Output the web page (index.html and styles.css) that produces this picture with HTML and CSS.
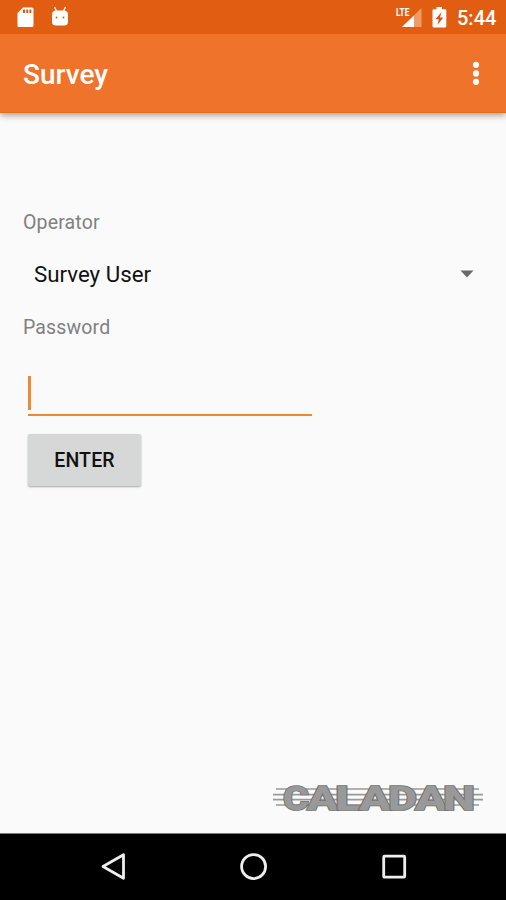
FILE: index.html
```html
<!DOCTYPE html>
<html lang="en">
<head>
<meta charset="utf-8">
<title>Survey</title>
<link rel="stylesheet" href="styles.css">
</head>
<body>
<div class="screen">
  <header class="status">
    <svg class="sd" width="17" height="21" viewBox="0 0 17 21"><path fill="#fff" fill-rule="evenodd" d="M6 .5H15Q16.500 .5 16.500 2V18.500Q16.500 20 15 20H2Q.5 20 .5 18.500V6ZM6 2.500V6H8V2.500ZM9.200 2.500V6H11.200V2.500ZM12.400 2.500V6H14.400V2.500Z"/></svg>
    <svg class="droid" width="18" height="20" viewBox="0 0 18 20"><path d="M3.500 0 6 5M14.500 0 12 5" stroke="#fff" stroke-width="1.300"/><path fill="#fff" d="M1 8Q1 3.500 5 3.500H13Q17 3.500 17 8V15Q17 18.500 13 18.500H5Q1 18.500 1 15Z"/><circle cx="5.500" cy="10.500" r="1" fill="#e15d12"/><circle cx="12.500" cy="10.500" r="1" fill="#e15d12"/></svg>
    <span class="spacer"></span>
    <svg class="signal" width="27" height="21" viewBox="0 0 27 21"><path fill="#f09a68" d="M25.500 1V20H6Z"/><path fill="#fff" d="M18 8.500V20H6Z"/><text class="lte" x="0" y="9" textLength="13.500" lengthAdjust="spacingAndGlyphs">LTE</text></svg>
    <svg class="battery" width="15" height="21" viewBox="0 0 15 21"><path fill="#fff" d="M4.500 0H10V2.300H13Q14.300 2.300 14.300 3.600V19Q14.300 20.500 13 20.500H2Q.5 20.500 .5 19V3.600Q.5 2.300 2 2.300H4.500Z"/><path fill="#df5010" d="M9.500 5 3.500 12.300H6.800L5.500 18 11.200 10.500H8Z"/></svg>
    <span class="clock">5:44</span>
  </header>
  <div class="appbar">
    <h1>Survey</h1>
    <svg width="8" height="26" viewBox="0 0 8 26" fill="#fff"><circle cx="4" cy="4.800" r="3.100"/><circle cx="4" cy="13.400" r="3.100"/><circle cx="4" cy="21.800" r="3.100"/></svg>
  </div>
  <main>
    <div class="label">Operator</div>
    <div class="select"><span>Survey User</span><svg width="14" height="8" viewBox="0 0 14 8"><path fill="#696969" d="M.5 .5H13.500L7 7.500Z"/></svg></div>
    <div class="label">Password</div>
    <div class="field"><span class="caret"></span></div>
    <button>ENTER</button>
    <svg class="logo" width="212" height="30" viewBox="0 0 212 30">
      <path class="rules" d="M4 5H207M1 10.700H211M1 15.700H211M4 21H207"/>
      <g class="letters">
        <text x="11" y="26" textLength="26" lengthAdjust="spacingAndGlyphs">C</text>
        <text x="35" y="26" textLength="31" lengthAdjust="spacingAndGlyphs">A</text>
        <text x="63" y="26" textLength="27" lengthAdjust="spacingAndGlyphs">L</text>
        <text x="87" y="26" textLength="32" lengthAdjust="spacingAndGlyphs">A</text>
        <text x="116" y="26" textLength="29" lengthAdjust="spacingAndGlyphs">D</text>
        <text x="143" y="26" textLength="32" lengthAdjust="spacingAndGlyphs">A</text>
        <text x="171" y="26" textLength="32" lengthAdjust="spacingAndGlyphs">N</text>
      </g>
    </svg>
  </main>
  <nav>
    <svg width="26" height="30" viewBox="0 0 26 30"><path d="M3 14.500 23.500 2.700V26.300Z"/></svg>
    <svg width="30" height="30" viewBox="0 0 30 30"><circle cx="14.600" cy="14.600" r="12"/></svg>
    <svg width="26" height="30" viewBox="0 0 26 30"><rect x="2.700" y="4.200" width="21" height="21" rx="1"/></svg>
  </nav>
</div>
</body>
</html>
```

FILE: styles.css
```css
* { box-sizing: border-box; }
body { margin: 0; font-family: Roboto, "Liberation Sans", sans-serif; }
svg { display: block; flex: none; overflow: visible; }
.screen { width: 506px; height: 900px; display: flex; flex-direction: column; background: #fafafa; overflow: hidden; }
.status { height: 34px; flex: none; display: flex; align-items: flex-start; padding: 7px 11px 0 17px; background: #e15d12; color: #fff; position: relative; z-index: 2; }
.droid { margin-left: 17px; }
.spacer { flex: 1; }
.battery { margin-left: 9px; }
.lte { font-size: 11px; font-weight: 700; fill: #fff; }
.clock { width: 38px; margin-left: 10px; font-size: 20px; line-height: 23px; font-weight: 500; white-space: nowrap; }
.appbar { height: 79px; flex: none; display: flex; align-items: center; justify-content: space-between; padding: 0 26px 0 23px; background: #ef732b; color: #fff; border-bottom: 1px solid #e86a20; box-shadow: 0 2px 7px rgba(0,0,0,.4); z-index: 1; }
h1 { margin: 3px 0 0; font-size: 28px; line-height: 32px; font-weight: 500; }
main { flex: 1; display: flex; flex-direction: column; align-items: flex-start; padding: 96px 22px 19px 23px; }
.label { height: 28px; font-size: 19.500px; line-height: 28px; letter-spacing: .15px; color: #818181; }
.select { width: 100%; height: 77px; padding: 0 10px 4px 11px; display: flex; align-items: center; justify-content: space-between; font-size: 22.300px; color: #111; }
.field { width: 284px; height: 43px; margin: 31px 0 0 5px; padding-top: 3px; border-bottom: 2px solid #ee8731; }
.caret { display: block; width: 3px; height: 34px; background: #ee8731; }
button { width: 113px; height: 52px; margin: 18px 0 0 5px; border: 0; border-radius: 2px; padding: 1px 0 0; background: #d6d7d7; color: #111; font: 500 19.500px/51px Roboto, sans-serif; letter-spacing: .15px; box-shadow: 0 1px 2px rgba(0,0,0,.35); }
.logo { margin-top: auto; align-self: flex-end; }
.rules { fill: none; stroke: #999; stroke-width: 1.700; }
.letters { font: 900 34px Roboto, sans-serif; fill: #999; stroke: #707070; stroke-width: 1.600px; paint-order: stroke; }
nav { height: 67px; flex: none; display: flex; align-items: center; justify-content: space-between; padding: 0 99px 0 100px; background: #000; border-top: 1px solid #777; }
nav svg { fill: none; stroke: #eee; stroke-width: 2.800; stroke-linejoin: round; }
```
